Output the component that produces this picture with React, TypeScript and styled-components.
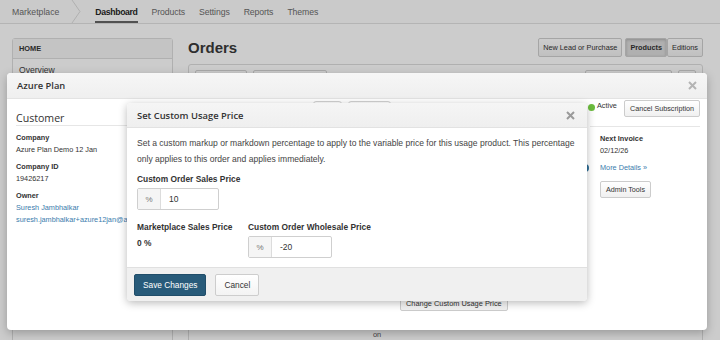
import React from "react";
import styled, { createGlobalStyle } from "styled-components";

const SANS = `"Liberation Sans", Arial, Helvetica, sans-serif`;
const HEAD = `"Open Sans", "Liberation Sans", Arial, sans-serif`;

const Global = createGlobalStyle`
  html, body { margin: 0; padding: 0; }
  body {
    width: 720px; height: 340px; overflow: hidden; background: #fff;
    font-family: ${SANS}; color: #333;
  }
  * { box-sizing: border-box; }
`;

const Screen = styled.div`
  position: relative;
  width: 720px;
  height: 340px;
  overflow: hidden;
`;

/* ---------------- background page ---------------- */
const Page = styled.div`
  display: flex;
  flex-direction: column;
  height: 100%;
  background: #fff;
`;

const NavBar = styled.nav`
  display: flex;
  align-items: stretch;
  height: 24px;
  padding-left: 12px;
  border-bottom: 1px solid #e2e2e2;
  background: #fdfdfd;
  font-size: 8.7px;
`;

const Brand = styled.span`
  display: flex;
  align-items: center;
  color: #6c6c6c;
  margin-right: 12px;
`;

const Crumb = styled.svg`
  width: 10px;
  height: 23px;
  margin-right: 14px;
`;

const NavItem = styled.span<{ $active?: boolean }>`
  display: flex;
  align-items: center;
  margin-right: 14px;
  padding-top: 2px;
  color: ${(p) => (p.$active ? "#262626" : "#6c6c6c")};
  font-weight: ${(p) => (p.$active ? 700 : 400)};
  letter-spacing: ${(p) => (p.$active ? "-0.35px" : "-0.1px")};
  border-bottom: 2px solid ${(p) => (p.$active ? "#666" : "transparent")};
`;

const Content = styled.div`
  display: flex;
  gap: 15px;
  padding: 14px 17px 0 12px;
  flex: 1;
`;

const Sidebar = styled.aside`
  width: 161px;
  height: 320px;
  border: 1px solid #dcdcdc;
  border-radius: 3px;
`;

const SideHead = styled.div`
  height: 20px;
  display: flex;
  align-items: center;
  padding-left: 6px;
  background: #f6f6f6;
  border-bottom: 1px solid #dcdcdc;
  font-size: 7.4px;
  font-weight: 700;
  color: #333;
`;

const SideItem = styled.div`
  padding: 6px 6px;
  font-size: 8.6px;
  color: #444;
`;

const Main = styled.main`
  flex: 1;
  display: flex;
  flex-direction: column;
`;

const MainHead = styled.div`
  height: 26px;
  display: flex;
  align-items: flex-start;
  justify-content: space-between;
`;

const Title = styled.h1`
  margin: 0;
  font-size: 15px;
  line-height: 19px;
  font-weight: 700;
  color: #3a3a3a;
`;

const BtnGroup = styled.div`
  display: flex;
  gap: 3px;
`;

const Segmented = styled.div`
  display: flex;
`;

const PageBtn = styled.span<{ $pressed?: boolean }>`
  height: 19px;
  display: flex;
  align-items: center;
  padding: 0 4px;
  font-size: 7.3px;
  color: #333;
  border: 1px solid #cfcfcf;
  border-radius: 2px;
  background: ${(p) =>
    p.$pressed ? "#dcdcdc" : "linear-gradient(#fff, #f1f1f1)"};
  box-shadow: ${(p) => (p.$pressed ? "inset 0 1px 3px rgba(0,0,0,.2)" : "none")};
  font-weight: ${(p) => (p.$pressed ? 700 : 400)};
`;

const Panel = styled.div`
  flex: 1;
  border: 1px solid #dcdcdc;
  border-radius: 3px;
  display: flex;
  flex-direction: column;
`;

const Toolbar = styled.div`
  display: flex;
  gap: 6px;
  padding: 5px 6px 0 6px;
  height: 30px;
`;

const ToolBtn = styled.span<{ $w: number }>`
  width: ${(p) => p.$w}px;
  height: 17px;
  border: 1px solid #d4d4d4;
  border-radius: 2px;
  background: linear-gradient(#fff, #f2f2f2);
`;

const ToolSpacer = styled.span`
  flex: 1;
`;

const TableRow = styled.div`
  margin-top: 227px;
  display: grid;
  grid-template-columns: 60px 54px 19px 43px 56px 117px 57px 51px 1fr;
  padding-left: 8px;
  font-size: 7.4px;
  line-height: 8.5px;
  color: #555;
`;

const Cell = styled.span``;

const StatusDot = styled.span<{ $size: number; $color: string }>`
  display: inline-block;
  width: ${(p) => p.$size}px;
  height: ${(p) => p.$size}px;
  border-radius: 50%;
  background: ${(p) => p.$color};
  flex: none;
`;

const Backdrop = styled.div`
  position: absolute;
  inset: 0;
  background: rgba(0, 0, 0, 0.2);
`;

/* ---------------- Azure Plan modal ---------------- */
const Modal = styled.section`
  position: absolute;
  left: 7px;
  top: 73px;
  width: 700px;
  height: 257px;
  background: #fff;
  border-radius: 4px;
  box-shadow: 0 3px 10px rgba(0, 0, 0, 0.25);
  overflow: hidden;
  display: flex;
  flex-direction: column;
`;

const ModalHeader = styled.header`
  height: 26px;
  flex: none;
  display: flex;
  align-items: center;
  justify-content: space-between;
  padding: 0 10px;
  background: linear-gradient(#f6f6f6, #efefef);
  border-bottom: 1px solid #e3e3e3;
`;

const ModalTitle = styled.h2`
  margin: 0;
  font-family: ${HEAD};
  font-size: 9.4px;
  font-weight: 600;
  color: #333;
`;

const CloseIcon = ({ color }: { color: string }) => (
  <svg width="9" height="9" viewBox="0 0 9 9">
    <path d="M1 1 L8 8 M8 1 L1 8" stroke={color} strokeWidth="2" strokeLinecap="butt" />
  </svg>
);

const ModalBody = styled.div`
  flex: 1;
  display: grid;
  grid-template-columns: 200px 1fr 112px;
  padding: 0 7px 0 9px;
`;

const CustomerCol = styled.div`
  padding-top: 12px;
`;

const CustTitle = styled.h3`
  margin: 0;
  font-family: ${HEAD};
  font-weight: 400;
  font-size: 10.6px;
  line-height: 14px;
  color: #333;
  border-bottom: 1px solid #e6e6e6;
  padding-bottom: 0;
  height: 15px;
`;

const Field = styled.div<{ $gap: number }>`
  margin-top: ${(p) => p.$gap}px;
  font-size: 7.3px;
  line-height: 12px;
`;

const FieldLabel = styled.div`
  font-weight: 700;
  color: #333;
`;

const FieldValue = styled.div`
  color: #333;
  white-space: nowrap;
`;

const Link = styled.div`
  color: #3a7cad;
  white-space: nowrap;
`;

const MiddleCol = styled.div`
  display: flex;
  flex-direction: column;
`;

const HiddenBtnRow = styled.div`
  display: flex;
  gap: 6px;
  margin: 2px 0 0 97px;
`;

const SmallBtn = styled.span<{ $w: number }>`
  width: ${(p) => p.$w}px;
  height: 16px;
  border: 1px solid #d2d2d2;
  border-radius: 3px;
  background: linear-gradient(#fff, #f0f0f0);
`;

const InfoDotRow = styled.div`
  display: flex;
  justify-content: flex-end;
  margin: 47px -1px 0 0;
`;

const ChangeBtn = styled.span`
  align-self: flex-start;
  margin: 123px 0 0 184px;
  height: 16px;
  display: flex;
  align-items: center;
  padding: 0 5px;
  font-size: 7.4px;
  color: #333;
  border: 1px solid #ccc;
  border-radius: 2px;
  background: linear-gradient(#fff, #f0f0f0);
  white-space: nowrap;
`;

const RightCol = styled.div`
  display: flex;
  flex-direction: column;
`;

const StatusRow = styled.div`
  display: flex;
  align-items: flex-start;
  margin-top: 1px;
  height: 17px;
`;

const ActiveText = styled.span`
  margin: 0 0 0 2px;
  font-size: 7.3px;
  line-height: 12px;
  color: #333;
`;

const SubBtn = styled.span`
  margin-left: auto;
  height: 17px;
  display: flex;
  align-items: center;
  padding: 0 5px;
  font-size: 7.2px;
  color: #333;
  border: 1px solid #ccc;
  border-radius: 2px;
  background: linear-gradient(#fff, #f0f0f0);
  white-space: nowrap;
`;

const Divider = styled.div`
  margin: 9px 0 0 2px;
  border-top: 1px solid #e6e6e6;
`;

const InvoiceSection = styled.div`
  padding-left: 12px;
  display: flex;
  flex-direction: column;
  align-items: flex-start;
`;

const AdminBtn = styled(SubBtn)`
  margin: 7px 0 0 0;
`;

/* ---------------- nested dialog ---------------- */
const Dialog = styled.section`
  position: absolute;
  left: 127px;
  top: 103px;
  width: 460px;
  height: 198px;
  background: #fff;
  border-radius: 4px;
  box-shadow: 0 2px 8px rgba(0, 0, 0, 0.28);
  overflow: hidden;
  display: flex;
  flex-direction: column;
`;

const DialogHeader = styled.header`
  height: 25px;
  flex: none;
  display: flex;
  align-items: center;
  justify-content: space-between;
  padding: 0 12px 0 10px;
  background: linear-gradient(#f5f5f5, #efefef);
  border-bottom: 1px solid #e2e2e2;
`;

const DialogBody = styled.div`
  flex: 1;
  padding: 7px 10px 0 10px;
`;

const Desc = styled.p`
  margin: 0;
  font-size: 8.55px;
  line-height: 16px;
  color: #444;
  white-space: nowrap;
`;

const Label = styled.div<{ $top?: number }>`
  margin-top: ${(p) => p.$top ?? 0}px;
  font-size: 8.4px;
  line-height: 14px;
  font-weight: 700;
  color: #333;
  white-space: nowrap;
`;

const InputGroup = styled.div<{ $w: number }>`
  margin-top: 2px;
  width: ${(p) => p.$w}px;
  height: 22px;
  display: flex;
  border: 1px solid #cfcfcf;
  border-radius: 2px;
`;

const Addon = styled.span`
  width: 23px;
  flex: none;
  display: flex;
  align-items: center;
  justify-content: center;
  background: #f5f5f5;
  border-right: 1px solid #dcdcdc;
  font-size: 8px;
  color: #777;
`;

const InputValue = styled.span`
  display: flex;
  align-items: center;
  padding-left: 8px;
  font-size: 8.5px;
  color: #333;
`;

const PriceRow = styled.div`
  display: flex;
  margin-top: 10px;
`;

const PriceCol = styled.div<{ $w?: number }>`
  width: ${(p) => (p.$w ? `${p.$w}px` : "auto")};
`;

const DialogFooter = styled.footer`
  height: 34px;
  flex: none;
  display: flex;
  align-items: center;
  gap: 9px;
  padding: 0 7px;
  background: #f0f0f0;
  border-top: 1px solid #e0e0e0;
`;

const FooterBtn = styled.span<{ $primary?: boolean }>`
  height: 22px;
  display: flex;
  align-items: center;
  padding: 0 8px;
  border-radius: 2px;
  font-size: 8.3px;
  color: ${(p) => (p.$primary ? "#fff" : "#333")};
  background: ${(p) => (p.$primary ? "#285b7a" : "linear-gradient(#fff, #f3f3f3)")};
  border: 1px solid ${(p) => (p.$primary ? "#214e6a" : "#cdcdcd")};
`;

export default function App() {
  return (
    <>
      <Global />
      <Screen>
        <Page>
          <NavBar>
            <Brand>Marketplace</Brand>
            <Crumb viewBox="0 0 10 23">
              <path d="M1 0 L9 11.5 L1 23" fill="none" stroke="#dcdcdc" strokeWidth="1" />
            </Crumb>
            <NavItem $active>Dashboard</NavItem>
            <NavItem>Products</NavItem>
            <NavItem>Settings</NavItem>
            <NavItem>Reports</NavItem>
            <NavItem>Themes</NavItem>
          </NavBar>
          <Content>
            <Sidebar>
              <SideHead>HOME</SideHead>
              <SideItem>Overview</SideItem>
            </Sidebar>
            <Main>
              <MainHead>
                <Title>Orders</Title>
                <BtnGroup>
                  <PageBtn>New Lead or Purchase</PageBtn>
                  <Segmented>
                    <PageBtn $pressed>Products</PageBtn>
                    <PageBtn>Editions</PageBtn>
                  </Segmented>
                </BtnGroup>
              </MainHead>
              <Panel>
                <Toolbar>
                  <ToolBtn $w={52} />
                  <ToolBtn $w={74} />
                  <ToolSpacer />
                  <ToolBtn $w={87} />
                  <ToolBtn $w={18} />
                </Toolbar>
                <TableRow>
                  <Cell>11/03/25</Cell>
                  <Cell>01/14/26</Cell>
                  <Cell>
                    <StatusDot $size={6} $color="#5fae3a" />
                  </Cell>
                  <Cell>Active</Cell>
                  <Cell>
                    Renews
                    <br />
                    on
                  </Cell>
                  <Cell>Azure Subscription</Cell>
                  <Cell>Yes</Cell>
                  <Cell>01/14/26</Cell>
                  <Cell>$0.00</Cell>
                </TableRow>
              </Panel>
            </Main>
          </Content>
        </Page>

        <Backdrop />

        <Modal>
          <ModalHeader>
            <ModalTitle>Azure Plan</ModalTitle>
            <CloseIcon color="#b4b4b4" />
          </ModalHeader>
          <ModalBody>
            <CustomerCol>
              <CustTitle>Customer</CustTitle>
              <Field $gap={6}>
                <FieldLabel>Company</FieldLabel>
                <FieldValue>Azure Plan Demo 12 Jan</FieldValue>
              </Field>
              <Field $gap={5}>
                <FieldLabel>Company ID</FieldLabel>
                <FieldValue>19426217</FieldValue>
              </Field>
              <Field $gap={5}>
                <FieldLabel>Owner</FieldLabel>
                <Link>Suresh Jambhalkar</Link>
                <Link>suresh.jambhalkar+azure12jan@appdirect.com</Link>
              </Field>
            </CustomerCol>

            <MiddleCol>
              <HiddenBtnRow>
                <SmallBtn $w={29} />
                <SmallBtn $w={43} />
              </HiddenBtnRow>
              <InfoDotRow>
                <StatusDot $size={8} $color="#2f6f98" />
              </InfoDotRow>
              <ChangeBtn>Change Custom Usage Price</ChangeBtn>
            </MiddleCol>

            <RightCol>
              <StatusRow>
                <StatusDot $size={7} $color="#6cbd3e" style={{ marginTop: 4 }} />
                <ActiveText>Active</ActiveText>
                <SubBtn>Cancel Subscription</SubBtn>
              </StatusRow>
              <Divider />
              <InvoiceSection>
                <Field $gap={6}>
                  <FieldLabel>Next Invoice</FieldLabel>
                  <FieldValue>02/12/26</FieldValue>
                </Field>
                <Field $gap={5}>
                  <Link>More Details »</Link>
                </Field>
                <AdminBtn>Admin Tools</AdminBtn>
              </InvoiceSection>
            </RightCol>
          </ModalBody>
        </Modal>

        <Dialog>
          <DialogHeader>
            <ModalTitle>Set Custom Usage Price</ModalTitle>
            <CloseIcon color="#9a9a9a" />
          </DialogHeader>
          <DialogBody>
            <Desc>
              Set a custom markup or markdown percentage to apply to the variable price for this usage product. This percentage
              <br />
              only applies to this order and applies immediately.
            </Desc>
            <Label $top={5}>Custom Order Sales Price</Label>
            <InputGroup $w={82}>
              <Addon>%</Addon>
              <InputValue>10</InputValue>
            </InputGroup>
            <PriceRow>
              <PriceCol $w={111}>
                <Label>Marketplace Sales Price</Label>
                <Label $top={2}>0 %</Label>
              </PriceCol>
              <PriceCol>
                <Label>Custom Order Wholesale Price</Label>
                <InputGroup $w={84}>
                  <Addon>%</Addon>
                  <InputValue>-20</InputValue>
                </InputGroup>
              </PriceCol>
            </PriceRow>
          </DialogBody>
          <DialogFooter>
            <FooterBtn $primary>Save Changes</FooterBtn>
            <FooterBtn>Cancel</FooterBtn>
          </DialogFooter>
        </Dialog>
      </Screen>
    </>
  );
}
